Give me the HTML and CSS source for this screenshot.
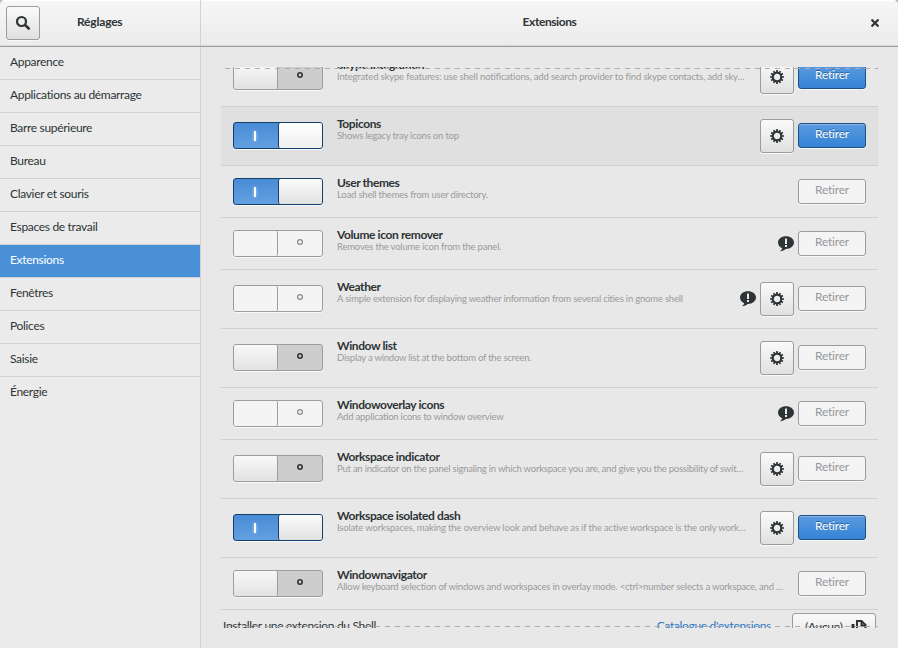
FILE: index.html
```html
<!DOCTYPE html>
<html lang="fr">
<head>
<meta charset="utf-8">
<title>Réglages</title>
<link rel="stylesheet" href="styles.css">
</head>
<body>
<svg class="defs" aria-hidden="true">
  <symbol id="gear" viewBox="0 0 14 14">
    <circle cx="7" cy="7" r="4.300" fill="none" stroke="currentColor" stroke-width="2.200"/>
    <g stroke="currentColor" stroke-width="1.700">
      <path d="M7 0V2.500M7 11.500V14M0 7H2.500M11.500 7H14"/>
      <path d="M3.600 1.100L4.800 3.200M9.200 10.800L10.400 12.900M10.400 1.100L9.200 3.200M4.800 10.800L3.600 12.900M1.100 3.600L3.200 4.800M10.800 9.200L12.900 10.400M12.900 3.600L10.800 4.800M3.200 9.200L1.100 10.400"/>
    </g>
  </symbol>
  <symbol id="warn" viewBox="0 0 16 16">
    <path fill="currentColor" d="M8 .3C3.500.3 0 3 0 6.500c0 2.600 1.700 4.600 4.200 5.700C4 13.400 3.300 14.200 2 15.200c2.500-.2 4.300-1 5.500-2.300H8c4.500 0 8-2.900 8-6.400S12.500.3 8 .3z"/>
    <path fill="#e8e8e8" d="M7 2.500h2v5.500H7zM7 9h2v2H7z"/>
  </symbol>
</svg>
<div class="window">
  <header class="header">
    <div class="header-side">
      <button class="btn square search"><svg width="16" height="16" viewBox="0 0 16 16"><circle cx="6.500" cy="6.500" r="4.500" fill="none" stroke="#2e3436" stroke-width="2.200"/><path d="M9.800 9.800L14.500 14.300" stroke="#2e3436" stroke-width="2.600"/></svg></button>
      <span class="side-title">Réglages</span>
    </div>
    <div class="header-main">
      <span>Extensions</span>
      <svg class="close" width="8" height="8" viewBox="0 0 8 8"><path d="M.5.500L7.500 7.500M7.500.5L.5 7.500" stroke="#2e3436" stroke-width="2.200"/></svg>
    </div>
  </header>
  <div class="body">
    <nav class="sidebar">
      <a>Apparence</a>
      <a>Applications au démarrage</a>
      <a>Barre supérieure</a>
      <a>Bureau</a>
      <a>Clavier et souris</a>
      <a>Espaces de travail</a>
      <a class="active">Extensions</a>
      <a>Fenêtres</a>
      <a>Polices</a>
      <a>Saisie</a>
      <a>Énergie</a>
    </nav>
    <main class="content">
      <div class="scroller">
        <div class="row tall">
          <div class="switch"><i></i><b></b></div>
          <div class="info"><h2>Skype integration</h2><p class="loose">Integrated skype features: use shell notifications, add search provider to find skype contacts, add sky…</p></div>
          <button class="btn square"><svg width="14" height="14"><use href="#gear"/></svg></button>
          <button class="btn remove">Retirer</button>
        </div>
        <div class="row tall hover">
          <div class="switch on"><b></b><i></i></div>
          <div class="info"><h2>Topicons</h2><p>Shows legacy tray icons on top</p></div>
          <button class="btn square"><svg width="14" height="14"><use href="#gear"/></svg></button>
          <button class="btn remove">Retirer</button>
        </div>
        <div class="row">
          <div class="switch on"><b></b><i></i></div>
          <div class="info"><h2>User themes</h2><p>Load shell themes from user directory.</p></div>
          <button class="btn remove off">Retirer</button>
        </div>
        <div class="row">
          <div class="switch disabled"><i></i><b></b></div>
          <div class="info"><h2>Volume icon remover</h2><p>Removes the volume icon from the panel.</p></div>
          <svg class="warn" width="16" height="16"><use href="#warn"/></svg>
          <button class="btn remove off">Retirer</button>
        </div>
        <div class="row tall">
          <div class="switch disabled"><i></i><b></b></div>
          <div class="info"><h2>Weather</h2><p>A simple extension for displaying weather information from several cities in gnome shell</p></div>
          <svg class="warn" width="16" height="16"><use href="#warn"/></svg>
          <button class="btn square"><svg width="14" height="14"><use href="#gear"/></svg></button>
          <button class="btn remove off">Retirer</button>
        </div>
        <div class="row tall">
          <div class="switch"><i></i><b></b></div>
          <div class="info"><h2>Window list</h2><p class="tight">Display a window list at the bottom of the screen.</p></div>
          <button class="btn square"><svg width="14" height="14"><use href="#gear"/></svg></button>
          <button class="btn remove off">Retirer</button>
        </div>
        <div class="row">
          <div class="switch disabled"><i></i><b></b></div>
          <div class="info"><h2>Windowoverlay icons</h2><p class="tight">Add application icons to window overview</p></div>
          <svg class="warn" width="16" height="16"><use href="#warn"/></svg>
          <button class="btn remove off">Retirer</button>
        </div>
        <div class="row tall">
          <div class="switch"><i></i><b></b></div>
          <div class="info"><h2>Workspace indicator</h2><p class="tight">Put an indicator on the panel signaling in which workspace you are, and give you the possibility of swit…</p></div>
          <button class="btn square"><svg width="14" height="14"><use href="#gear"/></svg></button>
          <button class="btn remove off">Retirer</button>
        </div>
        <div class="row tall">
          <div class="switch on"><b></b><i></i></div>
          <div class="info"><h2>Workspace isolated dash</h2><p class="loose">Isolate workspaces, making the overview look and behave as if the active workspace is the only work…</p></div>
          <button class="btn square"><svg width="14" height="14"><use href="#gear"/></svg></button>
          <button class="btn remove">Retirer</button>
        </div>
        <div class="row">
          <div class="switch"><i></i><b></b></div>
          <div class="info"><h2>Windownavigator</h2><p>Allow keyboard selection of windows and workspaces in overlay mode. &lt;ctrl&gt;number selects a workspace, and …</p></div>
          <button class="btn remove off">Retirer</button>
        </div>
        <div class="install">
          <span class="label">Installer une extension du Shell</span>
          <a>Catalogue d'extensions</a>
          <button class="btn file"><span>(Aucun)</span><svg width="16" height="16" viewBox="0 0 16 16" fill="none" stroke="#2e3436" stroke-width="2"><path d="M6 12V1H10.500L14.500 5V12Z"/><path d="M10.500 1V5.500H15"/><path d="M2 4V15H11" stroke-width="3"/></svg></button>
        </div>
      </div>
    </main>
  </div>
</div>
</body>
</html>
```
FILE: styles.css
```css
* { box-sizing: border-box; }
body {
  margin: 0;
  background: #b9b9b9;
  font-family: Lato, "Liberation Sans", sans-serif;
  font-size: 12px;
  letter-spacing: -0.32px;
  color: #2e3436;
}
.defs { display: none; }
.window {
  width: 898px;
  height: 648px;
  display: flex;
  flex-direction: column;
  background: #e8e8e8;
  border-radius: 5px 5px 0 0;
  overflow: hidden;
}
.header {
  height: 47px;
  flex: none;
  display: flex;
  background: linear-gradient(#f7f7f7, #ebebeb);
  border-bottom: 1px solid #9c9c9c;
  box-shadow: inset 0 1px #fff, inset 0 -1px #d9d9d9;
  font-weight: bold;
}
.header-side {
  width: 201px;
  padding: 6px;
  display: flex;
  border-right: 1px solid #d2d2d2;
}
.side-title {
  margin-left: 37px;
  line-height: 32px;
  letter-spacing: -0.2px;
}
.header-main {
  flex: 1;
  position: relative;
  text-align: center;
  line-height: 44px;
  letter-spacing: -0.42px;
}
.close {
  position: absolute;
  right: 19px;
  top: 19px;
}
.body { flex: 1; display: flex; min-height: 0; }
.sidebar {
  width: 201px;
  background: #ebebeb;
  border-right: 1px solid #d2d2d2;
}
.sidebar a {
  display: block;
  height: 33px;
  padding-left: 10px;
  line-height: 29px;
  border-bottom: 1px solid #d2d2d2;
}
.sidebar a:last-child { border-bottom: 0; }
.sidebar .active { background: #4a90d9; color: #fff; }
.content { flex: 1; padding: 20px 20px; min-width: 0; }
.scroller {
  height: 561px;
  overflow: hidden;
  position: relative;
}
.scroller::before,
.scroller::after {
  content: "";
  position: absolute;
  z-index: 1;
  left: 0;
  right: 0;
  height: 1px;
  background: repeating-linear-gradient(90deg, transparent 0 4px, #aeaeae 4px 9px, transparent 9px 10px);
}
.scroller::before { top: 1px; }
.scroller::after { bottom: 1px; }
.row {
  display: flex;
  align-items: center;
  gap: 4px;
  height: 52px;
  padding: 12px 12px 11px;
  border-bottom: 1px solid #d0d0d0;
}
.row.tall { height: 59px; padding-bottom: 12px; }
.row:first-child { margin-top: -19px; }
.hover { background: #e0e0e0; }
.info {
  flex: 1;
  min-width: 0;
  align-self: flex-start;
  margin: -1px 0 0 10px;
  white-space: nowrap;
}
.info h2 {
  margin: 0;
  font-size: 12px;
  line-height: 12px;
  letter-spacing: -0.4px;
}
.info p {
  margin: 0;
  font-size: 9.5px;
  line-height: 12px;
  letter-spacing: -0.2px;
  color: #999b9b;
}
.info .tight { letter-spacing: -0.23px; }
.info .loose { letter-spacing: -0.16px; }
.switch {
  flex: none;
  display: flex;
  width: 90px;
  height: 27px;
  margin-bottom: 1px;
  border: 1px solid #9c9c9c;
  border-radius: 3px;
  background: #cdcdcd;
  box-shadow: 0 1px #f8f8f8;
}
.switch i {
  width: 44px;
  border-right: 1px solid #9c9c9c;
  border-radius: 2px;
  background: linear-gradient(#f8f8f8, #e2e2e2);
}
.switch b {
  flex: 1;
  display: flex;
  align-items: center;
  justify-content: center;
}
.switch b::before {
  content: "";
  width: 6px;
  height: 6px;
  margin: 0 0 3px;
  border-radius: 50%;
  box-shadow: inset 0 0 0 1.6px #2e3436;
}
.switch.disabled, .switch.disabled i { background: #f4f4f4; }
.switch.disabled b::before { box-shadow: inset 0 0 0 1.2px #858a8b; }
.switch.on {
  background: linear-gradient(#4a8bd6, #62a0e0);
  border-color: #15406c;
}
.switch.on i {
  width: 44px;
  border-right: 0;
  border-left: 1px solid #15406c;
  background: linear-gradient(#fbfbfb, #e2e2e2);
}
.hover .switch.on i { background: linear-gradient(#fff, #efefef); }
.switch.on b::before {
  width: 2px;
  height: 10px;
  margin: 1px 2px 0 0;
  border-radius: 0;
  background: #fff;
  box-shadow: 0 0 3px #bcd8f5;
}
.btn {
  flex: none;
  margin: 0 0 1px;
  padding: 0;
  border: 1px solid #9c9c9c;
  border-radius: 3px;
  background: linear-gradient(#fafafa, #e0e0e0);
  box-shadow: 0 1px #f8f8f8;
  font: inherit;
  letter-spacing: inherit;
  color: #2e3436;
}
.square {
  width: 34px;
  height: 34px;
  margin-bottom: 0;
  display: flex;
  align-items: center;
  justify-content: center;
}
.remove {
  width: 68px;
  height: 25px;
  line-height: 19px;
  padding-bottom: 4px;
  letter-spacing: -0.2px;
  border-color: #1c5187;
  background: linear-gradient(#5a9be0, #3583d5);
  box-shadow: inset 0 1px #87b5e6, 0 1px #f8f8f8;
  color: #fff;
  text-shadow: 0 -1px #2a609c;
}
.remove.off {
  border-color: #9c9c9c;
  background: #f4f4f4;
  box-shadow: 0 1px #f8f8f8;
  color: #94989a;
  text-shadow: none;
}
.warn { flex: none; }
.install {
  display: flex;
  padding: 3px 2px;
  height: 40px;
  line-height: 26px;
}
.install .label { flex: 1; }
.install a { color: #2a76c6; margin-right: 21px; }
.file {
  width: 84px;
  height: 34px;
  display: flex;
  align-items: flex-start;
  padding: 0 8px 0 12px;
  justify-content: space-between;
}
.file svg { margin-top: 6px; }
```
